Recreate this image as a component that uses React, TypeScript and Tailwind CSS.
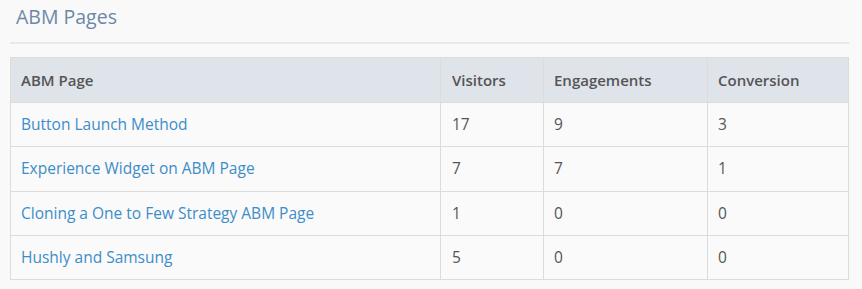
import React from 'react';

const rows = [
  { name: 'Button Launch Method', visitors: 17, engagements: 9, conversion: 3 },
  { name: 'Experience Widget on ABM Page', visitors: 7, engagements: 7, conversion: 1 },
  { name: 'Cloning a One to Few Strategy ABM Page', visitors: 1, engagements: 0, conversion: 0 },
  { name: 'Hushly and Samsung', visitors: 5, engagements: 0, conversion: 0 },
];

const App = () => {
  return (
    <div className="w-[862px] h-[289px] bg-[#f9f9f9] pl-[10px] pr-[13px] font-['Open_Sans',sans-serif]">
      <div className="h-[44px] border-b-2 border-[#e6e8ec]">
        <h2 className="pl-[6px] pt-[4px] text-[19.5px] leading-[26px] text-[#6c87a8]">ABM Pages</h2>
      </div>
      <table className="mt-[13px] w-full border-collapse border border-[#dcdcdc] table-fixed">
        <thead>
          <tr className="bg-[#dfe3ea] h-[45px] text-left text-[15px] text-[#555555]">
            <th className="w-[430px] border border-[#dcdcdc] px-[10px] font-semibold">ABM Page</th>
            <th className="w-[103px] border border-[#dcdcdc] px-[11px] font-semibold">Visitors</th>
            <th className="w-[164px] border border-[#dcdcdc] px-[10px] font-semibold">Engagements</th>
            <th className="border border-[#dcdcdc] px-[10px] font-semibold">Conversion</th>
          </tr>
        </thead>
        <tbody>
          {rows.map((r) => (
            <tr key={r.name} className="h-[44.25px] bg-[#fafafa] text-[15.5px] text-[#555555]">
              <td className="border border-[#dcdcdc] px-[10px]">
                <a href="#" className="text-[#3c8dc9]">{r.name}</a>
              </td>
              <td className="border border-[#dcdcdc] px-[11px]">{r.visitors}</td>
              <td className="border border-[#dcdcdc] px-[10px]">{r.engagements}</td>
              <td className="border border-[#dcdcdc] px-[10px]">{r.conversion}</td>
            </tr>
          ))}
        </tbody>
      </table>
    </div>
  );
};

export default App;
